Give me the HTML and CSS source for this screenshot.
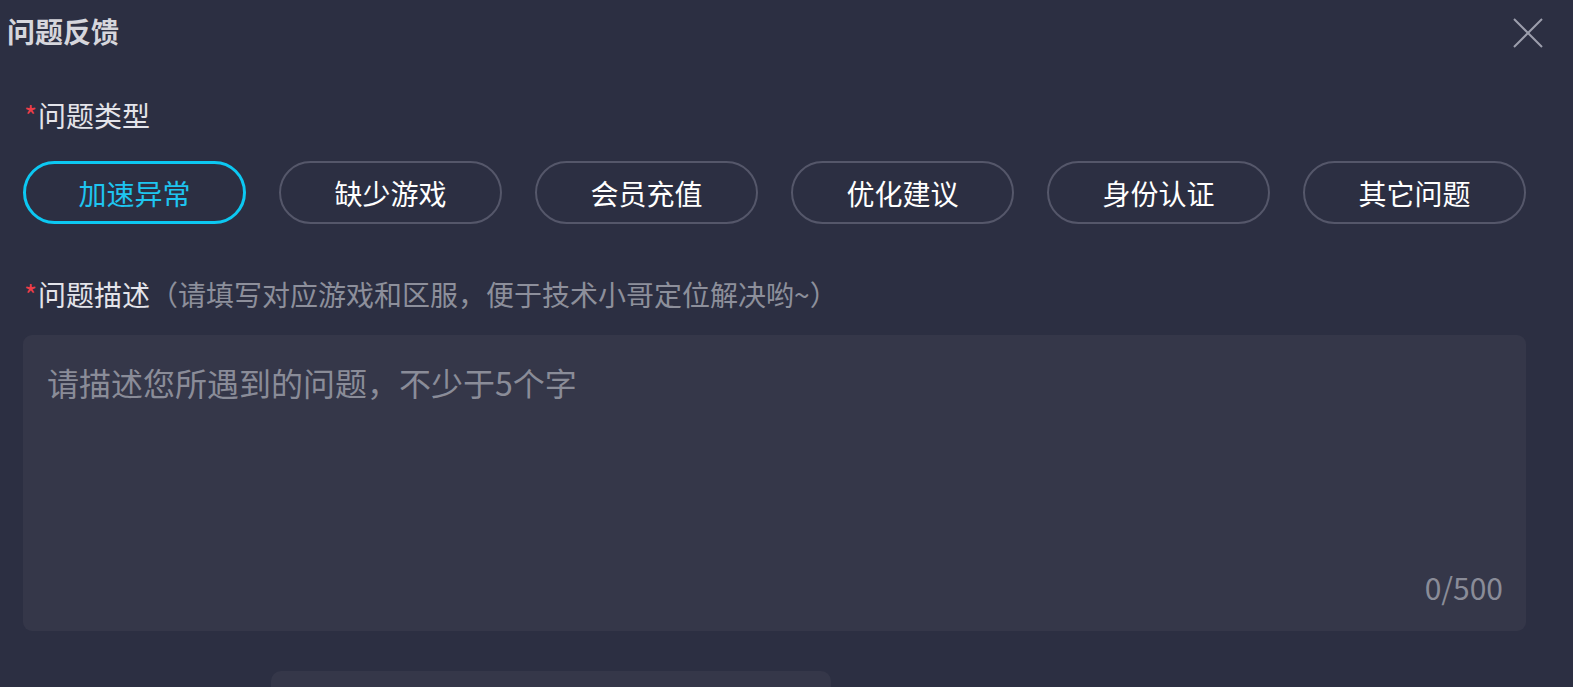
FILE: index.html
```html
<!DOCTYPE html>
<html lang="zh-CN">
<head>
<meta charset="utf-8">
<title>问题反馈</title>
<link rel="stylesheet" href="styles.css">
</head>
<body>
<div class="dialog">
  <header class="header">
    <h1 class="title">问题反馈</h1>
    <button class="close" aria-label="关闭">
      <svg width="30" height="30" viewBox="0 0 30 30"><path d="M1 1 L29 29 M29 1 L1 29" stroke="#9c9eac" stroke-width="2" fill="none"/></svg>
    </button>
  </header>
  <div class="content">
    <div class="label label-type"><span class="req">*</span>问题类型</div>
    <div class="types">
      <button class="type active">加速异常</button>
      <button class="type">缺少游戏</button>
      <button class="type">会员充值</button>
      <button class="type">优化建议</button>
      <button class="type">身份认证</button>
      <button class="type">其它问题</button>
    </div>
    <div class="label label-desc"><span class="req">*</span>问题描述<span class="hint">（请填写对应游戏和区服，便于技术小哥定位解决哟~）</span></div>
    <div class="editor">
      <textarea class="input" placeholder="请描述您所遇到的问题，不少于5个字"></textarea>
      <div class="counter">0/500</div>
    </div>
    <div class="actions">
      <div class="submit"></div>
    </div>
  </div>
</div>
</body>
</html>
```

FILE: styles.css
```css
html, body {
  margin: 0;
  padding: 0;
  height: 687px;
  overflow: hidden;
  background: #2c2f42;
}
body {
  font-family: "Noto Sans CJK SC", "Noto Sans", sans-serif;
  color: #e6e6ea;
}
.dialog {
  display: flex;
  flex-direction: column;
}
.header {
  display: flex;
  justify-content: space-between;
  align-items: flex-start;
  padding: 11px 30px 0 7px;
}
.title {
  margin: 0;
  font-size: 28px;
  line-height: 40px;
  font-weight: 700;
  color: #d6d6dc;
}
.close {
  margin-top: 7px;
  padding: 0;
  width: 30px;
  height: 30px;
  border: 0;
  background: none;
  display: block;
}
.close svg { display: block; }
.content {
  display: flex;
  flex-direction: column;
  padding: 0 47px 0 23px;
}
.label {
  font-size: 28px;
  line-height: 40px;
  color: #e4e4ea;
  white-space: nowrap;
}
.label-type { margin-top: 44px; }
.req {
  color: #ee3d48;
  margin-right: 1px;
  margin-left: 1px;
}
.types {
  display: flex;
  justify-content: space-between;
  margin-top: 26px;
}
.type {
  width: 223px;
  height: 63px;
  box-sizing: border-box;
  border: 2px solid #55576a;
  border-radius: 32px;
  background: transparent;
  color: #ffffff;
  font-family: inherit;
  font-size: 28px;
  line-height: 40px;
  padding: 0;
  display: flex;
  align-items: center;
  justify-content: center;
}
.type.active {
  border: 3px solid #0cc8f2;
  color: #1ec5f0;
}
.label-desc { margin-top: 50px; }
.hint { color: #8d8f9b; }
.editor {
  margin-top: 21px;
  height: 296px;
  box-sizing: border-box;
  background: #353749;
  border-radius: 9px;
  display: flex;
  flex-direction: column;
  padding-bottom: 24px;
}
.input {
  flex: 1;
  border: 0;
  outline: none;
  resize: none;
  background: transparent;
  font-family: inherit;
  font-size: 32px;
  line-height: 44px;
  padding: 25px 24px 0 24px;
  color: #e6e6ea;
  margin: 0;
}
.input::placeholder { color: #8a8c98; }
.counter {
  align-self: flex-end;
  margin-right: 23px;
  font-size: 30px;
  line-height: 40px;
  color: #8a8c98;
}
.actions {
  margin-top: 40px;
  display: flex;
  padding-left: 248px;
}
.submit {
  width: 560px;
  height: 60px;
  background: #353749;
  border-radius: 10px;
}
```
